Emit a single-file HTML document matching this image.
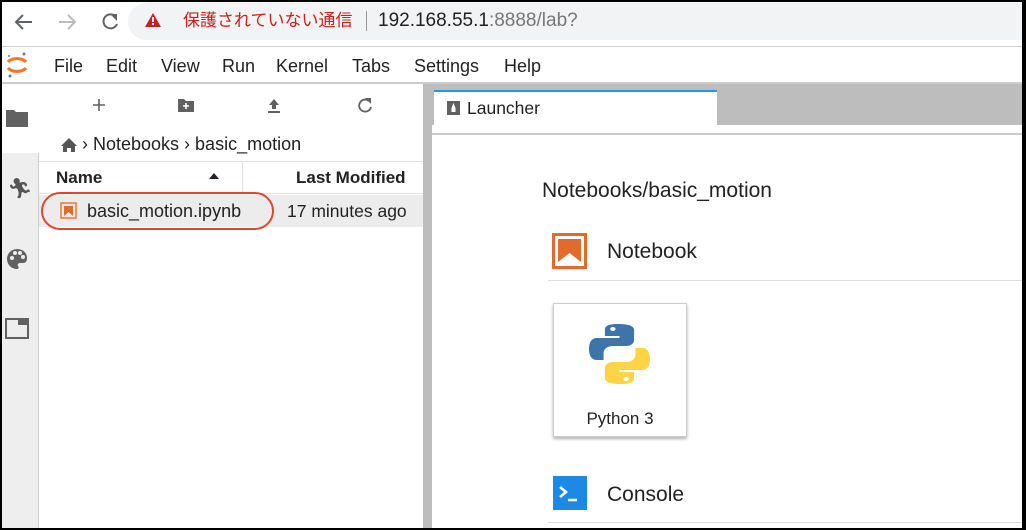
<!DOCTYPE html>
<html><head><meta charset="utf-8"><style>
*{margin:0;padding:0;box-sizing:border-box}
body{width:1026px;height:530px;background:#000;position:relative;overflow:hidden;font-family:"Liberation Sans","Noto Sans CJK JP",sans-serif;color:#222}
.a{position:absolute}
.m{position:absolute;top:56px;font-size:18px;line-height:20px}
</style></head><body>
<div class="a" style="left:2px;top:2px;width:1020px;height:526px;background:#fff"></div>
<div class="a" style="left:128px;top:3px;width:894px;height:37px;background:#f1f3f4;border-radius:19px 0 0 19px"></div>
<svg class="a" style="left:12px;top:10px" width="110" height="24" viewBox="0 0 110 24">
<path d="M20 12H4M11 5l-7 7 7 7" stroke="#5f6368" stroke-width="2" fill="none"/>
<path d="M47 12H63M56 5l7 7-7 7" stroke="#bbb" stroke-width="2" fill="none"/>
<path d="M104 7a7 7 0 1 0 1 7" stroke="#5f6368" stroke-width="2" fill="none"/><path d="M98 4h7v7z" fill="#5f6368"/>
</svg>
<svg class="a" style="left:145px;top:13px" width="16" height="14"><path d="M8 0L16 14H0z" fill="#c5221f"/><rect x="7" y="4" width="2" height="5" fill="#fff"/><rect x="7" y="10" width="2" height="2" fill="#fff"/></svg>
<div class="a" style="left:183px;top:9px;font-size:17px;color:#c5221f;line-height:24px">保護されていない通信</div>
<div class="a" style="left:366px;top:11px;width:1px;height:20px;background:#999"></div>
<div class="a" style="left:378px;top:9px;font-size:19px;line-height:24px;color:#202124">192.168.55.1<span style="color:#777">:8888/lab?</span></div>
<div class="a" style="left:2px;top:46px;width:1020px;height:1px;background:#ccc"></div>
<svg class="a" style="left:5px;top:50px" width="24" height="30"><path d="M3 12a10 6 0 0 1 18 0" stroke="#f37726" stroke-width="3" fill="none"/><path d="M3 18a10 6 0 0 0 18 0" stroke="#f37726" stroke-width="3" fill="none"/><circle cx="19" cy="4" r="1.5" fill="#777"/><circle cx="5" cy="26" r="1.5" fill="#777"/><circle cx="4" cy="6" r="1" fill="#777"/></svg>
<div class="m" style="left:54px">File</div><div class="m" style="left:106px">Edit</div><div class="m" style="left:161px">View</div><div class="m" style="left:222px">Run</div><div class="m" style="left:276px">Kernel</div><div class="m" style="left:352px">Tabs</div><div class="m" style="left:414px">Settings</div><div class="m" style="left:504px">Help</div>
<div class="a" style="left:2px;top:82px;width:1020px;height:2px;background:#ccc"></div>
<div class="a" style="left:2px;top:153px;width:36px;height:375px;background:#eee"></div>
<div class="a" style="left:38px;top:153px;width:1px;height:375px;background:#ccc"></div>
<svg class="a" style="left:6px;top:108px" width="24" height="20"><path d="M0 2h8l2 2h12v15H0z" fill="#616161"/></svg>
<div class="a" style="left:7px;top:176px;font-size:20px;color:#555">🏃︎</div>
<svg class="a" style="left:6px;top:248px" width="22" height="22"><path d="M11 1a10 10 0 0 0 0 20c2 0 2-2 1-3s0-3 2-3h3c3 0 4-2 4-5C21 5 17 1 11 1z" fill="#616161"/><circle cx="6" cy="10" r="2" fill="#eee"/><circle cx="9" cy="5" r="2" fill="#eee"/><circle cx="14" cy="5" r="2" fill="#eee"/><circle cx="17" cy="9" r="2" fill="#eee"/></svg>
<svg class="a" style="left:5px;top:318px" width="24" height="22"><rect x="1" y="1" width="22" height="19" fill="none" stroke="#616161" stroke-width="2"/><rect x="13" y="1" width="10" height="6" fill="#616161"/></svg>
<svg class="a" style="left:90px;top:96px" width="300" height="20">
<path d="M9 3v12M3 9h12" stroke="#616161" stroke-width="1.6"/>
<path d="M88 3h6l2 2h8v11H88z" fill="#616161"/><path d="M96 7v6M93 10h6" stroke="#fff" stroke-width="1.6"/>
<path d="M184 3l-5 6h3v4h4V9h3z M178 15h12v2h-12z" fill="#616161"/>
<path d="M279 5a6 6 0 1 0 2 6" stroke="#616161" stroke-width="1.8" fill="none"/><path d="M275 2h6v6z" fill="#616161"/>
</svg>
<svg class="a" style="left:60px;top:137px" width="18" height="16"><path d="M9 1L1 9h2v6h4v-4h4v4h4V9h2z" fill="#555"/></svg>
<div class="a" style="left:82px;top:134px;font-size:18px;line-height:20px">› Notebooks › basic_motion</div>
<div class="a" style="left:39px;top:161px;width:384px;height:1px;background:#e0e0e0"></div>
<div class="a" style="left:39px;top:193px;width:384px;height:1px;background:#e0e0e0"></div>
<div class="a" style="left:242px;top:162px;width:1px;height:31px;background:#e0e0e0"></div>
<div class="a" style="left:56px;top:168px;font-size:17px;font-weight:bold;line-height:20px">Name</div>
<svg class="a" style="left:209px;top:173px" width="10" height="6"><path d="M0 6L5 0l5 6z" fill="#222"/></svg>
<div class="a" style="left:296px;top:168px;font-size:17px;font-weight:bold;line-height:20px">Last Modified</div>
<div class="a" style="left:39px;top:195px;width:384px;height:32px;background:#ececec"></div>
<div class="a" style="left:41px;top:192px;width:233px;height:38px;border:2.5px solid #e0452f;border-radius:19px"></div>
<svg class="a" style="left:60px;top:202px" width="17" height="17"><rect x="1" y="1" width="15" height="15" fill="none" stroke="#f37726" stroke-width="1.5"/><path d="M4 4h9v10l-4.5-4L4 14z" fill="#e06b2a"/></svg>
<div class="a" style="left:87px;top:201px;font-size:18px;line-height:20px">basic_motion.ipynb</div>
<div class="a" style="left:287px;top:201px;font-size:17.5px;line-height:20px">17 minutes ago</div>
<div class="a" style="left:423px;top:84px;width:9px;height:444px;background:#bdbdbd"></div>
<div class="a" style="left:432px;top:84px;width:590px;height:41px;background:#bdbdbd"></div>
<div class="a" style="left:434px;top:90px;width:283px;height:37px;background:#fff;border-top:2px solid #2196f3"></div>
<div class="a" style="left:432px;top:133px;width:590px;height:2px;background:#ccc"></div>
<svg class="a" style="left:447px;top:101px" width="13" height="14"><rect width="13" height="14" fill="#616161"/><path d="M6.5 2l2 5v4h-4V7z" fill="#fff"/></svg>
<div class="a" style="left:467px;top:98px;font-size:17.5px;line-height:20px">Launcher</div>
<div class="a" style="left:542px;top:180px;font-size:21px;line-height:22px">Notebooks/basic_motion</div>
<svg class="a" style="left:552px;top:233px" width="35" height="36"><rect x="1.5" y="1.5" width="32" height="33" fill="#fff" stroke="#e06b2a" stroke-width="3"/><path d="M6 6h23v23l-11.5-9L6 29z" fill="#e06b2a"/></svg>
<div class="a" style="left:607px;top:240px;font-size:21px;line-height:24px">Notebook</div>
<div class="a" style="left:548px;top:280px;width:474px;height:1px;background:#ddd"></div>
<div class="a" style="left:553px;top:303px;width:134px;height:134px;background:#fff;border:1px solid #ccc;box-shadow:0 2px 3px rgba(0,0,0,.3)"></div>
<svg class="a" style="left:589px;top:323px" width="61" height="62" viewBox="0 0 46 62" preserveAspectRatio="none">
<path d="M22 1c-9 0-10 3-10 6v6h11v2H6c-4 0-6 4-6 11s2 11 6 11h5v-7c0-4 3-7 7-7h10c4 0 6-3 6-6V7c0-4-4-6-12-6z" fill="#3d75a8"/>
<circle cx="18" cy="6" r="2" fill="#fff"/>
<path d="M24 61c9 0 10-3 10-6v-6H23v-2h17c4 0 6-4 6-11s-2-11-6-11h-5v7c0 4-3 7-7 7H18c-4 0-6 3-6 6v10c0 4 4 6 12 6z" fill="#fdd445"/>
<circle cx="28" cy="56" r="2" fill="#fff"/>
</svg>
<div class="a" style="left:553px;top:409px;width:134px;text-align:center;font-size:17px;line-height:20px">Python 3</div>
<svg class="a" style="left:553px;top:476px" width="34" height="34"><rect width="34" height="34" fill="#1e88e5"/><path d="M7 11l6 5-6 5" stroke="#fff" stroke-width="2.5" fill="none"/><path d="M15 24h9" stroke="#fff" stroke-width="2.5"/></svg>
<div class="a" style="left:607px;top:483px;font-size:21px;line-height:24px">Console</div>
<div class="a" style="left:548px;top:522px;width:474px;height:1px;background:#ddd"></div>
</body></html>
